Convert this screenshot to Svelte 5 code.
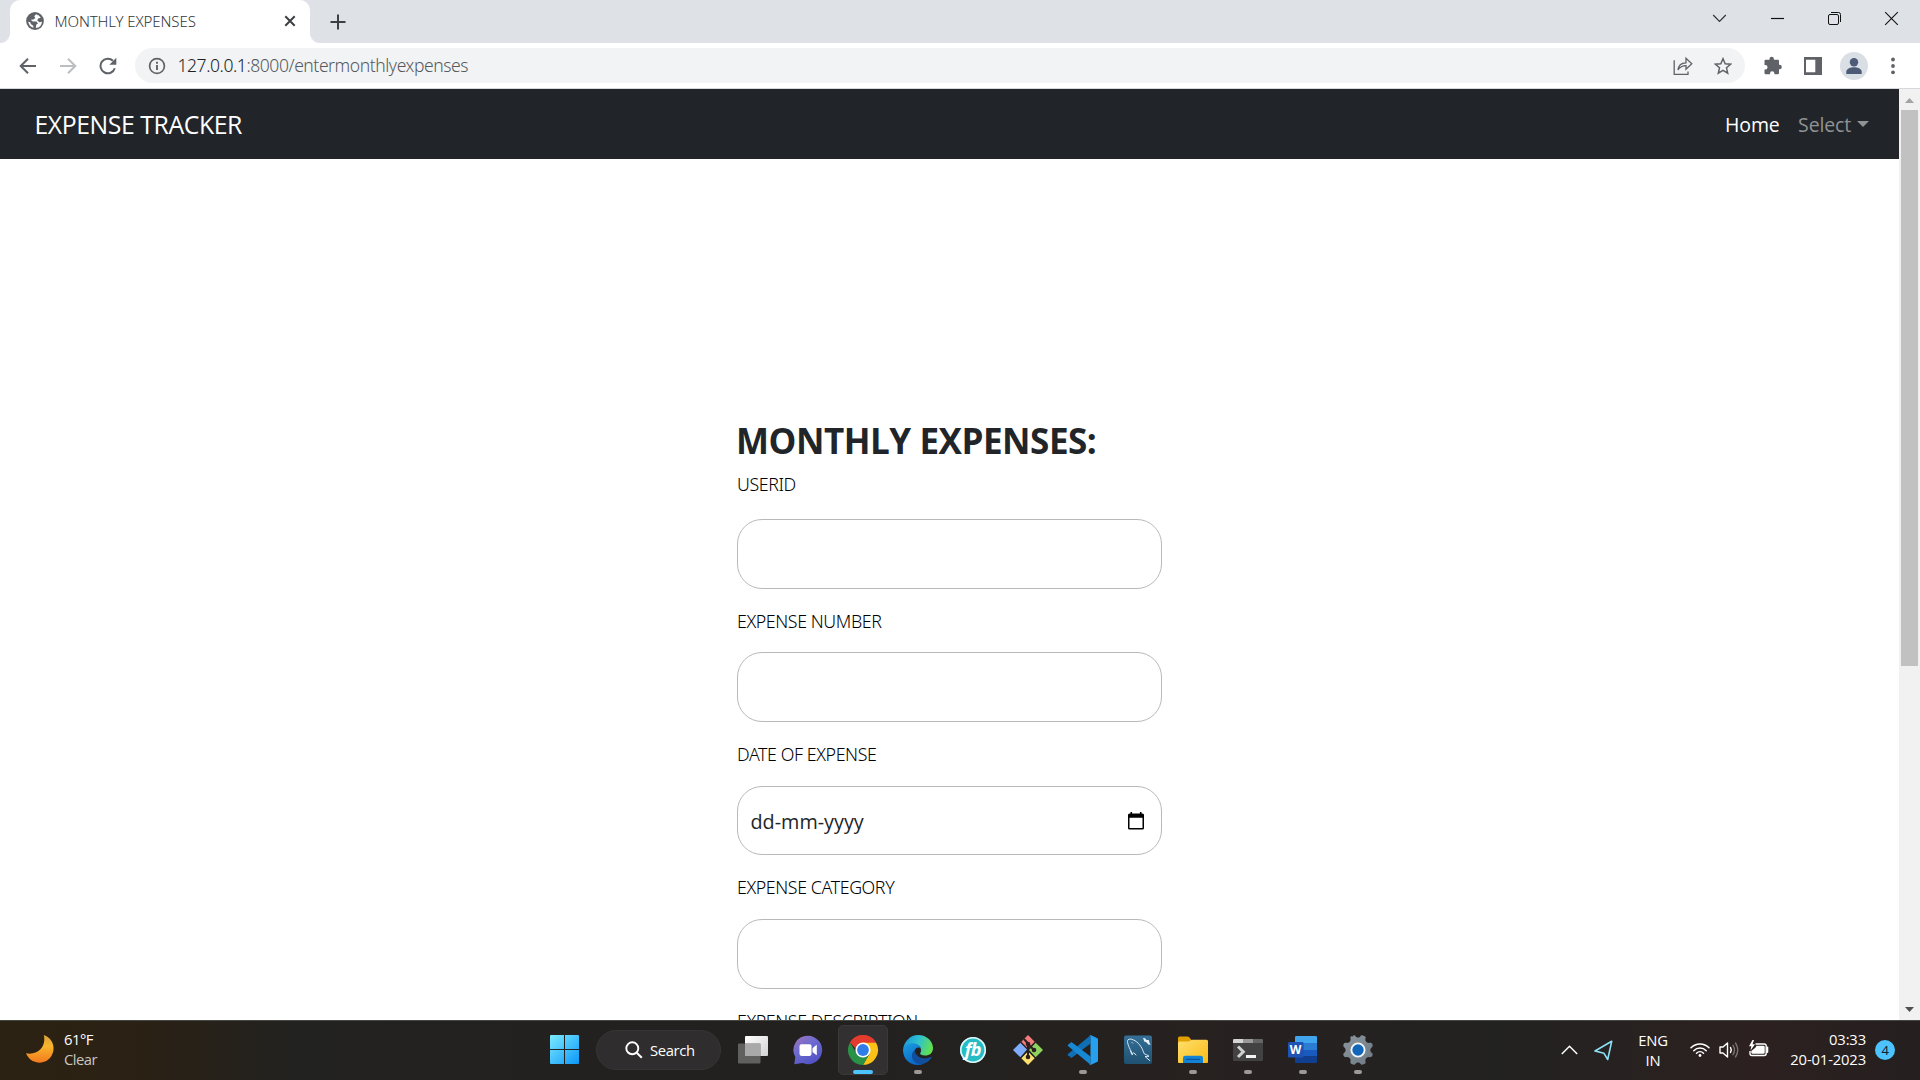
<script>
  const fields = [
    { label: 'USERID', type: 'text' },
    { label: 'EXPENSE NUMBER', type: 'text' },
    { label: 'DATE OF EXPENSE', type: 'date' },
    { label: 'EXPENSE CATEGORY', type: 'text' },
    { label: 'EXPENSE DESCRIPTION', type: 'text' }
  ];

  const apps = [
    { name: 'taskview' },
    { name: 'chat' },
    { name: 'chrome', state: 'active' },
    { name: 'edge', state: 'open' },
    { name: 'fb' },
    { name: 'git' },
    { name: 'vscode', state: 'open' },
    { name: 'mysql' },
    { name: 'explorer', state: 'open' },
    { name: 'terminal', state: 'open' },
    { name: 'word', state: 'open' },
    { name: 'settings', state: 'open' }
  ];
</script>

{#snippet appIcon(name)}
  <svg class="app-icon" width="32" height="32" viewBox="0 0 32 32">
    {#if name === 'taskview'}
      <defs>
        <linearGradient id="tv" x1="0" y1="0" x2="1" y2="1"><stop offset="0" stop-color="#fff" /><stop offset="1" stop-color="#d2d2d2" /></linearGradient>
      </defs>
      <rect x="8" y="2" width="23" height="20" rx="1" fill="url(#tv)" />
      <rect x="1" y="9.500" width="22.500" height="20" rx="1" fill="#6e6e6e" fill-opacity=".82" />
      <path d="M8 9.500h15.500v12.500h-15.500z" fill="#a9a9a9" />
    {:else if name === 'chat'}
      <defs>
        <linearGradient id="ch" x1="0" y1="0" x2=".7" y2="1"><stop offset="0" stop-color="#a474b8" /><stop offset=".45" stop-color="#6d6bd0" /><stop offset="1" stop-color="#5051c4" /></linearGradient>
      </defs>
      <path d="M16 1.800a14.200 14.200 0 1 1-5.500 27.300L2.300 30.200 3.300 23A14.200 14.200 0 0 1 16 1.800z" fill="url(#ch)" />
      <rect x="7.500" y="10.300" width="12" height="11.600" rx="1.800" fill="#fff" />
      <path d="M20.500 14.300l3.800-3.200q.5-.3.500.4v9.200q0 .7-.5.400l-3.800-3.200z" fill="#fff" />
    {:else if name === 'chrome'}
      <path d="M16 16L3 8.500A15 15 0 0 1 29 8.500z" fill="#e33b2e" />
      <path d="M16 8.500H29A15 15 0 0 1 16 31L22.500 19.700z" fill="#fbc116" />
      <path d="M3 8.500A15 15 0 0 0 16 31L22.500 19.800 16 22 9.500 19.800z" fill="#2a9247" />
      <path d="M3 8.500A15 15 0 0 1 29 8.500H16L9 15z" fill="#e33b2e" />
      <circle cx="16" cy="16" r="7.600" fill="#fff" />
      <circle cx="16" cy="16" r="5.900" fill="#2f7de9" />
    {:else if name === 'edge'}
      <defs>
        <linearGradient id="eg1" x1="0" y1=".2" x2="1" y2=".5"><stop offset="0" stop-color="#1a93d8" /><stop offset=".5" stop-color="#2fc2cf" /><stop offset="1" stop-color="#63e04e" /></linearGradient>
        <linearGradient id="eg2" x1="0" y1="0" x2=".6" y2="1"><stop offset="0" stop-color="#1b9fe2" /><stop offset="1" stop-color="#0b62c4" /></linearGradient>
      </defs>
      <path d="M1 16C2 7 8.500 1 16 1c9 0 15 6.500 15 13 0 5-3.500 7.500-8 7.500-3.500 0-5.300-1.200-4.800-2.300 2.300-3 .5-7.700-5.200-8.700C7 10 2.500 12 1 16z" fill="url(#eg1)" />
      <path d="M1 16c1-4.500 5.500-7 10.500-6.800 4.500.3 7.600 3 7.800 5.800-1.500-2-6-2.400-7 2.600-.8 5.400 3.500 11.900 9.500 12.200C12.500 33.800 1 28 1 16z" fill="url(#eg2)" />
      <path d="M12.300 16.500c-2.700 2-3.300 6.500-.8 10 3.500 5 12.500 5.300 18-2.700.5-.8 0-1.200-.8-.8-6.500 3.200-14.200.8-16.400-6.500z" fill="#114f9e" />
    {:else if name === 'fb'}
      <circle cx="16" cy="16" r="13" fill="#25bcc6" />
      <circle cx="16" cy="16" r="12.200" fill="none" stroke="#e9f8f8" stroke-width="1.600" />
      <text x="15.700" y="21.800" class="fb-text">fb</text>
    {:else if name === 'git'}
      <path d="M16 1l6.700 6.700-6.700 6.800-6.700-6.800z" fill="#f47b7b" />
      <path d="M8.300 8.700L15 15.500 8.300 23.300 1 16z" fill="#80adfb" />
      <path d="M23.700 8.700L31 16l-7.300 7.300L17 16z" fill="#8cd35f" />
      <path d="M16 17.500l6.700 6.800L16 31l-6.700-6.700z" fill="#fbe06f" />
      <path d="M12 5l4 4.500V23M16 10l6 6" stroke="#2b1f1f" stroke-width="2" fill="none" />
      <circle cx="16" cy="10" r="2.300" fill="#2b1f1f" />
      <circle cx="22" cy="16" r="2.300" fill="#2b1f1f" />
      <circle cx="16" cy="23" r="2.300" fill="#2b1f1f" />
    {:else if name === 'vscode'}
      <path d="M23.500 1.300v8.200L4.500 24 1 21.300q-.6-.6 0-1.200z" fill="#0f6fb5" />
      <path d="M23.500 30.700v-8.200L4.500 8 1 10.700q-.6.600 0 1.200z" fill="#1788d4" />
      <path d="M23.500 1L30 4q1 .5 1 1.500v21q0 1-1 1.500l-6.500 3q-.8.300-1.500-.3 1.500.5 1.500-1.200v-27Q23.500.800 22 1.300q.7-.6 1.500-.3z" fill="#26a0ee" />
    {:else if name === 'mysql'}
      <defs>
        <linearGradient id="my" x1="0" y1="0" x2="0" y2="1"><stop offset="0" stop-color="#356f98" /><stop offset="1" stop-color="#1f5170" /></linearGradient>
      </defs>
      <rect x="2" y="1.500" width="28" height="28.500" rx="2" fill="url(#my)" />
      <g fill="none" stroke="#dbe9f1" stroke-width="1" stroke-linecap="round" stroke-linejoin="round">
        <path d="M10.500 20.500L9 17C6.500 12.500 4.500 7 6 5.700c2-1.500 5 0 7 1 5 3 7.500 8 9 12.800 1 1 4 1.500 5 2.800l-4 .2 4.700 4" />
        <path d="M8.500 17l1.300 3.500 2-1.800 2.200 2.300M10 8.500l.6.600" />
      </g>
      <path d="M21 4l2 .3 1.500 1.800 2.300-.1.800 3 1 1.500-2 .3-2.600-2.800-1.600-.2z" fill="#e9f1f5" />
    {:else if name === 'explorer'}
      <defs>
        <linearGradient id="fo" x1="0" y1="0" x2="1" y2="1"><stop offset="0" stop-color="#ffdf70" /><stop offset="1" stop-color="#f9bb12" /></linearGradient>
      </defs>
      <path d="M1 4q0-1.500 1.500-1.500h8q1 0 1.700.7L14.500 6H20v6H1z" fill="#e0a000" />
      <path d="M1 9q0-1.500 1.500-1.500h9L15 5.800h14.500Q31 5.800 31 7.300V28q0 1-1 1H2q-1 0-1-1z" fill="url(#fo)" />
      <path d="M6 29v-5q0-2.300 2.300-2.300h15.400Q26 21.700 26 24v5z" fill="#1183d6" />
      <path d="M9.500 25.300h13" stroke="#0b539b" stroke-width="1.300" stroke-linecap="round" />
    {:else if name === 'terminal'}
      <path d="M1 8h30v17.700q0 1.300-1.300 1.300H2.300Q1 27 1 25.700z" fill="#424242" />
      <path d="M1 9V6.300Q1 5 2.300 5H11v4z" fill="#d5d5d5" />
      <path d="M11 5h10v4H11z" fill="#999" />
      <path d="M21 5h8.700Q31 5 31 6.300V9H21z" fill="#666" />
      <path d="M6 12.500l5.300 5.300L6 23" fill="none" stroke="#d0d0d0" stroke-width="3" />
      <path d="M14 21h10v3H14z" fill="#f4f4f4" />
    {:else if name === 'word'}
      <path d="M8 3.300Q8 2 9.300 2h19.400Q30 2 30 3.300V9H8z" fill="#41a5ee" />
      <path d="M8 9h22v7H8z" fill="#2b7cd3" />
      <path d="M8 16h22v6.500H8z" fill="#185abd" />
      <path d="M8 22.500h22v5.200Q30 29 28.700 29H9.300Q8 29 8 27.700z" fill="#103f91" />
      <rect x="1" y="8" width="15.500" height="15.500" rx="1.300" fill="#1d53b5" />
      <text x="8.600" y="20" class="word-text">W</text>
    {:else}
      <defs>
        <linearGradient id="ge" x1="0" y1="0" x2="1" y2="1"><stop offset="0" stop-color="#8d969d" /><stop offset="1" stop-color="#6c7984" /></linearGradient>
      </defs>
      <path d="M11.200 2.500q-.6-1 .6-1.300 1-.3 1.600.7c1.200 2 4 2 5.200 0q.6-1 1.600-.7l2.600 1q1.200.5.800 1.700c-.8 2.500.6 4.800 3.200 5 2.400-.2 3.300.2 3.800 1.800q.4 1.500-.5 2.200c-2.300 1.600-2.300 4.600 0 6.200q.9.700.5 2.200c-.5 1.600-1.400 2-3.800 1.800-2.600.2-4 2.500-3.200 5q.4 1.200-.8 1.700l-2.600 1q-1 .3-1.600-.7c-1.200-2-4-2-5.200 0q-.6 1-1.600.7l-2.600-1q-1.200-.5-.8-1.700c.8-2.500-.6-4.800-3.200-5-2.400.2-3.300-.2-3.800-1.800Q1 19.800 1.900 19.100c2.300-1.600 2.300-4.600 0-6.200Q1 12.200 1.400 10.700C1.900 9.100 2.800 8.700 5.200 8.900c2.600-.2 4-2.500 3.200-5Q8 2.700 9.200 2.200z" fill="url(#ge)" />
      <circle cx="16" cy="16" r="6.600" fill="#1066b8" stroke="#f4f4f4" stroke-width="1.900" />
    {/if}
  </svg>
{/snippet}

<div class="screen">
  <header class="tabstrip">
    <div class="tab">
      <svg class="favicon" width="18" height="18" viewBox="0 0 18 18">
        <circle cx="9" cy="9" r="8.900" fill="#5f6368" />
        <path d="M10 2.200L8.300 4.300 9.300 6 7.500 7.500 4.700 7.800 6.800 9.500h3.800l1.300 2-1.700 1.300-.4 3.200A7 7 0 0 0 16 9.700l-2.800.6-2-2 1-1.800 2.600-.8A7 7 0 0 0 10 2.200zM2.200 9.800c.5 3 2.500 5.400 5.300 6l-.3-2L4.800 12l-.5-1.800z" fill="#fff" />
      </svg>
      <span class="tab-title">MONTHLY EXPENSES</span>
      <svg class="tab-close" width="12" height="12" viewBox="0 0 12 12"><path d="M1.300 1.300l9.400 9.400M10.700 1.300L1.300 10.700" stroke="#3c4043" stroke-width="2" /></svg>
    </div>
    <svg class="new-tab" width="16" height="16" viewBox="0 0 16 16"><path d="M8 .500v15M.500 8h15" stroke="#3c4043" stroke-width="2" /></svg>
    <div class="window-controls">
      <svg width="15" height="15" viewBox="0 0 15 15"><path d="M1.200 4l6.300 6.500L13.800 4" fill="none" stroke="#333" stroke-width="1.200" /></svg>
      <svg width="15" height="15" viewBox="0 0 15 15"><path d="M1 7.500h13" stroke="#111" stroke-width="1.200" /></svg>
      <svg width="15" height="15" viewBox="0 0 15 15"><rect x="1.500" y="3.500" width="10" height="10" rx="1.500" fill="none" stroke="#111" /><path d="M4 1.500h7.500q2 0 2 2V11" fill="none" stroke="#111" /></svg>
      <svg width="15" height="15" viewBox="0 0 15 15"><path d="M1.200 1.200l12.600 12.600M13.800 1.200L1.200 13.800" stroke="#111" stroke-width="1.100" /></svg>
    </div>
  </header>

  <div class="toolbar">
    <div class="nav-buttons">
      <svg width="18" height="18" viewBox="0 0 18 18"><path d="M17 9H2M9 1.700L1.700 9 9 16.300" fill="none" stroke="#5f6368" stroke-width="2" /></svg>
      <svg width="18" height="18" viewBox="0 0 18 18"><path d="M1 9h15M9 1.700L16.300 9 9 16.300" fill="none" stroke="#bcbec0" stroke-width="2" /></svg>
      <svg width="18" height="18" viewBox="0 0 18 18"><path d="M15.800 11.200A7.300 7.300 0 1 1 14 3.800" fill="none" stroke="#5f6368" stroke-width="2" /><path d="M17.300.800v7h-7z" fill="#5f6368" /></svg>
    </div>
    <div class="omnibox">
      <svg width="18" height="18" viewBox="0 0 18 18"><circle cx="9" cy="9" r="7.400" fill="none" stroke="#5f6368" stroke-width="1.700" /><path d="M9 8v5M9 4.800v1.900" stroke="#5f6368" stroke-width="1.900" /></svg>
      <span class="url"><span class="host">127.0.0.1</span>:8000/entermonthlyexpenses</span>
      <svg class="share" width="20" height="20" viewBox="0 0 20 20" fill="none" stroke="#5f6368" stroke-width="1.300"><path d="M1.200 4.200V18.300H15V15.500" /><path d="M5 14c.4-4.800 3-7 8-7.200V2.300L18.800 7.800 13 13.300V9.600C9 9.600 6.800 11 5 14z" /></svg>
      <svg class="star" width="18" height="18" viewBox="0 0 18 18"><path d="M9 1.700l2.200 5 5.400.5-4.100 3.600 1.200 5.300L9 13.300l-4.700 2.800 1.200-5.300L1.400 7.200l5.400-.5z" fill="none" stroke="#5f6368" stroke-width="1.500" /></svg>
    </div>
    <div class="extensions">
      <svg width="18" height="19" viewBox="0 0 18 19"><path d="M1.700 3.800h3.800V3a2.200 2.200 0 0 1 4.400 0v.8h3.900q1.200 0 1.200 1.200v3.800h.6a2.200 2.200 0 0 1 0 4.400H15V17q0 1.300-1.200 1.300h-3.400v-.8a2.200 2.200 0 0 0-4.400 0v.8H1.700Q.500 18.300.500 17v-3.600h.8a2.200 2.200 0 0 0 0-4.500H.500V5q0-1.200 1.200-1.200z" fill="#5f6368" /></svg>
      <svg width="18" height="18" viewBox="0 0 18 18"><path d="M0 0h18v18H0zM2 2.700v12.600h9.300V2.700z" fill="#5f6368" fill-rule="evenodd" /></svg>
      <svg width="28" height="28" viewBox="0 0 28 28"><circle cx="14" cy="14" r="14" fill="#dadee5" /><circle cx="14" cy="10.300" r="4.200" fill="#4d5b76" /><path d="M6.300 22v-2.300c0-3 4.500-4.400 7.700-4.400s7.700 1.400 7.700 4.400V22z" fill="#4d5b76" /></svg>
      <svg width="4" height="18" viewBox="0 0 4 18" fill="#5f6368"><circle cx="2" cy="2.500" r="1.900" /><circle cx="2" cy="9" r="1.900" /><circle cx="2" cy="15.300" r="1.900" /></svg>
    </div>
  </div>

  <main class="viewport">
    <div class="page">
      <nav class="navbar">
        <span class="brand">EXPENSE TRACKER</span>
        <span class="nav-link active">Home</span>
        <span class="nav-link">Select</span>
        <span class="caret"></span>
      </nav>
      <form class="form">
        <h1>MONTHLY EXPENSES:</h1>
        {#each fields as field}
          <div class="field">
            <span class="label">{field.label}</span>
            <div class="input">
              {#if field.type === 'date'}
                <span>dd-mm-yyyy</span>
                <svg width="16" height="18" viewBox="0 0 16 18"><path d="M3.300 0v2M12.700 0v2" stroke="#000" stroke-width="1.600" /><path d="M1.500 1.500h13Q16 1.500 16 3v13q0 1.500-1.500 1.500h-13Q0 17.500 0 16V3q0-1.500 1.500-1.500zM1.500 5.800V16h13V5.800z" fill="#000" fill-rule="evenodd" /></svg>
              {/if}
            </div>
          </div>
        {/each}
      </form>
    </div>
    <div class="scrollbar">
      <svg width="9" height="5" viewBox="0 0 9 5"><path d="M0 5L4.500 0 9 5z" fill="#a3a3a3" /></svg>
      <div class="thumb"></div>
      <svg width="9" height="5" viewBox="0 0 9 5"><path d="M0 0h9L4.500 5z" fill="#505050" /></svg>
    </div>
  </main>

  <footer class="taskbar">
    <div class="weather">
      <svg width="28" height="28" viewBox="0 0 28 28">
        <defs><linearGradient id="moon" x1="0" y1="0" x2="0" y2="1"><stop offset="0" stop-color="#d9a13c" /><stop offset=".4" stop-color="#f6b52c" /><stop offset="1" stop-color="#f4791d" /></linearGradient></defs>
        <path d="M17.800 0A14.200 14.200 0 1 1 0 18.300C12 20.500 20.500 12 17.800 0z" fill="url(#moon)" />
      </svg>
      <div class="weather-text"><span>61°F</span><span class="dim">Clear</span></div>
    </div>

    <div class="apps">
      <svg class="start" width="30" height="30" viewBox="0 0 30 30">
        <defs><linearGradient id="win" gradientUnits="userSpaceOnUse" x1="0" y1="0" x2="29" y2="29"><stop offset="0" stop-color="#7cebff" /><stop offset="1" stop-color="#0c97f8" /></linearGradient></defs>
        <path d="M1 0h13v14H0V1q0-1 1-1zM15 0h13q1 0 1 1v13H15zM0 15h14v14H1q-1 0-1-1zM15 15h14v13q0 1-1 1H15z" fill="url(#win)" />
      </svg>
      <div class="search">
        <svg width="18" height="18" viewBox="0 0 18 18"><circle cx="7.300" cy="7.300" r="6" fill="none" stroke="#fff" stroke-width="1.900" /><path d="M11.700 11.700l5.100 5.100" stroke="#fff" stroke-width="2" /></svg>
        <span>Search</span>
      </div>
      {#each apps as app}
        <div class={['app', app.state]}>
          {@render appIcon(app.name)}
          {#if app.state}<span class="indicator"></span>{/if}
        </div>
      {/each}
    </div>

    <div class="tray">
      <svg class="chevron" width="17" height="10" viewBox="0 0 17 10"><path d="M.800 9L8.500 1.300 16.200 9" fill="none" stroke="#fff" stroke-width="1.500" /></svg>
      <svg class="location" width="19" height="21" viewBox="0 0 19 21"><path d="M17.700 1.300L1 11l9 2.300L13.700 19.500z" fill="none" stroke="#8ce0f5" stroke-width="1.600" stroke-linejoin="round" /></svg>
      <div class="lang"><span>ENG</span><span>IN</span></div>
      <svg class="wifi" width="20" height="16" viewBox="0 0 20 16" fill="none" stroke="#fff" stroke-width="1.500" stroke-linecap="round"><path d="M1 5.800a12.600 12.600 0 0 1 18 0M3.800 8.700a8.700 8.700 0 0 1 12.400 0M6.500 11.200a5 5 0 0 1 7 0" /><circle cx="10" cy="13.500" r="1.400" fill="#fff" stroke="none" /></svg>
      <svg class="volume" width="20" height="18" viewBox="0 0 20 18" fill="none" stroke="#fff" stroke-width="1.400" stroke-linecap="round" stroke-linejoin="round"><path d="M1 6h3L8.500 2v14L4 12H1z" /><path d="M11.500 6.500q1.600 2.500 0 5" /><path d="M14 4.300q3 4.700 0 9.400M16.500 2q4.500 7 0 14" stroke="#77716f" /></svg>
      <svg class="battery" width="21" height="17" viewBox="0 0 21 17"><path d="M7.500 4h8.700q2 0 2 2v7.500q0 2-2 2H4q-2 0-2-2V11" fill="none" stroke="#fff" stroke-width="1.400" /><path d="M8.500 5.700h7q1.200 0 1.200 1.200v5.700q0 1.200-1.200 1.200h-11q-1.200 0-1.200-1.200V11l4-3.200z" fill="#fff" /><path d="M19.400 7.500v4.500" stroke="#fff" stroke-width="1.800" stroke-linecap="round" /><path d="M4.500 0L1 6.300h2.300L2.500 10.500 7 4.300H4.500L6 0z" fill="#fff" /></svg>
      <div class="clock"><span>03:33</span><span>20-01-2023</span></div>
      <span class="badge">4</span>
    </div>
  </footer>
</div>

<style>
  :global(body) { margin: 0; overflow: hidden; }
  .screen {
    width: 1920px; height: 1080px; display: flex; flex-direction: column; overflow: hidden;
    background: #fff; font-family: "Open Sans", "Noto Sans", sans-serif; color: #212529;
  }
  svg { display: block; flex: none; }
  span { white-space: nowrap; }

  .tabstrip { flex: none; height: 43px; background: #dee1e6; display: flex; align-items: center; padding-left: 10px; box-sizing: border-box; }
  .tab { position: relative; width: 300px; height: 43px; box-sizing: border-box; background: #fff; border-radius: 10px 10px 0 0; display: flex; align-items: center; padding: 0 15px 1px 16px; }
  .tab::before, .tab::after { content: ''; position: absolute; bottom: 0; width: 10px; height: 10px; }
  .tab::before { left: -10px; background: radial-gradient(circle at 0 0, transparent 9.5px, #fff 10.5px); }
  .tab::after { right: -10px; background: radial-gradient(circle at 100% 0, transparent 9.5px, #fff 10.5px); }
  .tab-title { margin-left: 10.500px; font-family: "Noto Sans", sans-serif; font-size: 15px; font-weight: 300; letter-spacing: -0.100px; color: #33373a; line-height: 20px; margin-top: -1px; }
  .tab-close { margin-left: auto; margin-right: -1px; }
  .new-tab { margin-left: 19.500px; }
  .window-controls { margin-left: auto; display: flex; gap: 42.200px; padding: 0 21px 6px 0; }

  .toolbar { flex: none; height: 46px; box-sizing: border-box; border-bottom: 1px solid #d5d7da; display: flex; align-items: center; padding-left: 18.500px; }
  .nav-buttons { display: flex; gap: 22px; width: 116.500px; }
  .omnibox { width: 1610px; height: 35px; box-sizing: border-box; background: #f1f3f4; border-radius: 18px; display: flex; align-items: center; padding: 0 13.500px 0 13px; }
  .url { margin-left: 11.500px; font-family: "Noto Sans", sans-serif; font-size: 17.500px; font-weight: 300; letter-spacing: -0.430px; color: #55595e; line-height: 24px; margin-top: -1px; }
  .host { color: #202124; }
  .share { margin-left: auto; }
  .star { margin-left: 21px; }
  .extensions { display: flex; align-items: center; gap: 22px; margin-left: 18.500px; }
  .extensions svg:nth-child(3) { margin-left: -4px; }
  .extensions svg:nth-child(4) { margin-left: 1.500px; }

  .viewport { flex: none; height: 931px; display: flex; overflow: hidden; }
  .page { width: 1899px; height: 931px; overflow: hidden; }
  .navbar { height: 70px; box-sizing: border-box; background: #212529; display: flex; align-items: center; padding: 0 30px 0 34.500px; }
  .brand { font-size: 24.800px; letter-spacing: -0.430px; color: #fff; margin-right: auto; }
  .nav-link { font-size: 19.500px; letter-spacing: -0.150px; color: #909294; margin-right: 6px; padding-top: 1px; }
  .nav-link.active { color: #fff; margin-right: 18.500px; }
  .caret { border: 6px solid transparent; border-top-color: #909294; border-bottom: 0; }

  .form { width: 425px; margin-left: 737px; padding-top: 261px; }
  h1 { margin: 0 0 9px -1px; font-size: 35px; line-height: 42px; font-weight: 700; letter-spacing: -0.460px; white-space: nowrap; }
  .label { display: block; font-family: "Noto Sans", sans-serif; font-size: 17.800px; font-weight: 300; line-height: 27px; letter-spacing: -0.400px; color: #000; margin-bottom: 17.700px; }
  .field { margin-bottom: 19px; }
  .field:nth-of-type(1) .label { margin-bottom: 21.200px; }
  .input { height: 69.600px; box-sizing: border-box; border: 1px solid #b9b9b9; border-radius: 25px; display: flex; align-items: center; justify-content: space-between; padding: 2px 17px 0 12.500px; font-size: 19.800px; color: #212529; }
  .input svg { margin-top: -1px; }

  .scrollbar { width: 21px; background: #f1f1f1; display: flex; flex-direction: column; align-items: center; padding: 9px 0 8px; box-sizing: border-box; }
  .thumb { width: 17px; height: 556px; margin: 7px 0 auto; background: #c1c1c1; }

  .taskbar {
    position: relative; flex: none; height: 60px; box-sizing: border-box; border-top: 1px solid #454743; padding-bottom: 1px; color: #fff; font-size: 14.800px; line-height: 20px; letter-spacing: -0.200px;
    background: linear-gradient(90deg, #2b2213 0, #2b2114 130px, #222220 300px, #222120 600px, #24211f 1050px, #272120 1200px, #222221 1500px, #2c2120 1750px, #251f1f 1920px);
    display: flex; align-items: center;
  }
  .weather { display: flex; align-items: center; gap: 10px; padding-left: 26px; width: 524px; }
  .weather > svg { margin-top: -2px; }
  .weather-text { display: flex; flex-direction: column; letter-spacing: -0.500px; margin-top: -3px; }
  .dim { color: #c9c6c2; }
  .apps { display: flex; align-items: center; height: 58px; }
  .search { width: 125px; height: 40px; box-sizing: border-box; margin: 0 4.500px 0 16px; border-radius: 20px; background: #2f2d2d; border: 1px solid #363434; display: flex; align-items: center; gap: 7px; padding-left: 28px; letter-spacing: -0.350px; }
  .search svg { margin-top: -1px; }
  .search span { margin-top: -1px; }
  .app { position: relative; width: 50px; height: 50px; box-sizing: border-box; margin: 0 2.530px; display: flex; align-items: center; justify-content: center; border-radius: 5px; }
  .app.active { background: #323030; border: 1px solid #3a3838; }
  .indicator { position: absolute; bottom: 1px; left: 21px; width: 8px; height: 4px; border-radius: 2px; background: #9b9896; }
  .active .indicator { bottom: 0; left: 14px; width: 20px; background: #4cc2ff; }
  .app-icon { overflow: visible; }
  .fb-text { font: italic 700 18px "Open Sans", sans-serif; fill: #fff; text-anchor: middle; letter-spacing: -0.800px; }
  .word-text { font: 700 12px "Open Sans", sans-serif; fill: #fff; text-anchor: middle; letter-spacing: 0; }

  .tray { margin-left: auto; display: flex; align-items: center; padding-right: 25px; }
  .location { margin-left: 16px; }
  .lang { display: flex; flex-direction: column; align-items: center; width: 40px; margin-left: 20px; margin-top: -1px; }
  .wifi { margin-left: 17px; }
  .volume { margin-left: 9px; }
  .battery { margin-left: 9px; margin-top: -3px; }
  .clock { display: flex; flex-direction: column; align-items: flex-end; width: 98px; margin-top: -3px; letter-spacing: -0.150px; }
  .clock span { margin-right: 1px; }
  .badge { width: 20px; height: 20px; margin-left: 8px; border-radius: 50%; background: #4cc2ff; color: #10202c; font-size: 13px; text-align: center; }
</style>
